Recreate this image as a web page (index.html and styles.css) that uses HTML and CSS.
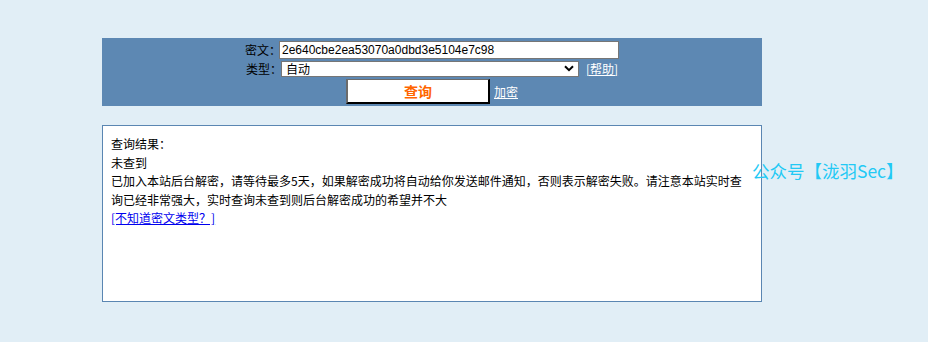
FILE: index.html
```html
<!DOCTYPE html>
<html lang="zh-CN">
<head>
<meta charset="utf-8">
<title>MD5</title>
<link rel="stylesheet" href="styles.css">
</head>
<body>
<div class="page">
  <form class="panel">
    <div class="row">
      <span class="label">密文：</span>
      <input class="hash" type="text" value="2e640cbe2ea53070a0dbd3e5104e7c98">
    </div>
    <div class="row">
      <span class="label">类型：</span>
      <div class="select">
        <span>自动</span>
        <svg class="chev" width="10" height="7" viewBox="0 0 10 7"><path d="M1 1.2 L5 5.2 L9 1.2" fill="none" stroke="#000" stroke-width="2"/></svg>
      </div>
      <a class="help" href="#">[帮助]</a>
    </div>
    <div class="row">
      <button class="query" type="button">查询</button>
      <a class="enc" href="#">加密</a>
    </div>
  </form>
  <div class="result">
    <div class="line">查询结果：</div>
    <div class="line">未查到</div>
    <div class="line">已加入本站后台解密，请等待最多5天，如果解密成功将自动给你发送邮件通知，否则表示解密失败。请注意本站实时查询已经非常强大，实时查询未查到则后台解密成功的希望并不大</div>
    <div class="line"><a class="type" href="#">[不知道密文类型？]</a></div>
    <div class="mark">公众号【泷羽Sec】</div>
  </div>
</div>
</body>
</html>
```

FILE: styles.css
```css
html, body {
  margin: 0;
  padding: 0;
  background: #e1eef6;
}
body {
  font-family: "Noto Sans CJK SC", "Liberation Sans", sans-serif;
  font-size: 12px;
  color: #000;
}
.page {
  width: 660px;
  margin-left: 102px;
  padding-top: 38px;
}
.panel {
  margin: 0;
  height: 68px;
  box-sizing: border-box;
  background: #5d88b3;
  padding-top: 3px;
  display: flex;
  flex-direction: column;
  align-items: center;
  gap: 2px;
}
.row {
  display: flex;
  align-items: center;
  height: 17px;
}
.row:nth-child(3) {
  height: 25px;
  gap: 4px;
}
.label {
  width: 36px;
  line-height: 16px;
  color: #000;
}
.hash {
  box-sizing: border-box;
  width: 340px;
  height: 18px;
  margin: 0 0 0 -2px;
  padding: 0 2px;
  border: 1px solid #767676;
  background: #fff;
  font-family: "Liberation Sans", sans-serif;
  font-size: 12px;
  color: #000;
  outline: none;
}
.select {
  box-sizing: border-box;
  width: 298px;
  height: 16px;
  margin-left: -1px;
  border: 1px solid #767676;
  background: #fff;
  display: flex;
  align-items: center;
  justify-content: space-between;
  padding: 0 4px 0 4px;
  line-height: 14px;
}
.chev {
  display: block;
}
.help {
  margin-left: 7px;
  color: #fff;
  line-height: 16px;
  text-decoration: underline;
}
.query {
  box-sizing: border-box;
  width: 144px;
  height: 25px;
  margin: 0;
  padding: 0;
  background: #fff;
  border-top: 1px solid #6b6b6b;
  border-left: 2px solid #6b6b6b;
  border-right: 2px solid #000;
  border-bottom: 2px solid #000;
  font-family: "Noto Sans CJK SC", sans-serif;
  font-size: 14px;
  font-weight: bold;
  color: #ff6600;
  line-height: 20px;
}
.enc {
  color: #fff;
  text-decoration: underline;
  line-height: 16px;
}
.result {
  position: relative;
  margin-top: 19px;
  height: 177px;
  box-sizing: border-box;
  background: #fff;
  border: 1px solid #5a86b2;
  padding: 9px 12px 0 8px;
  line-height: 18.5px;
}
.type {
  color: #0000ee;
  text-decoration: underline;
}
.mark {
  position: absolute;
  left: 649px;
  top: 33px;
  white-space: nowrap;
  font-size: 17.5px;
  line-height: 24px;
  color: #22c9f5;
}
```
